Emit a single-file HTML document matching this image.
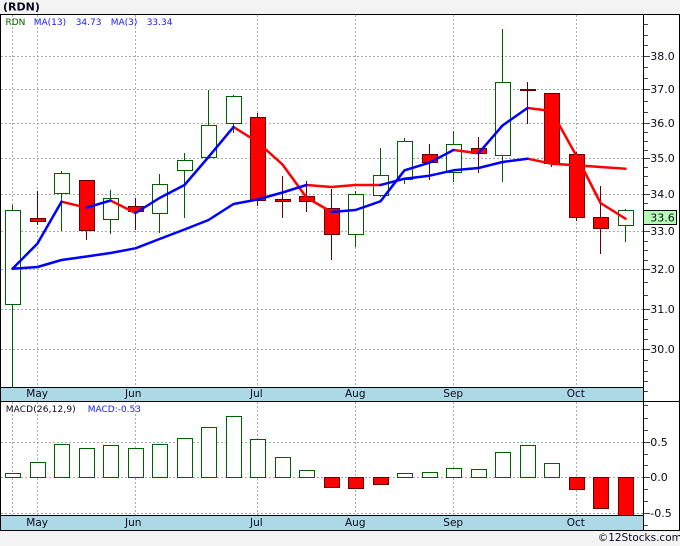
<!DOCTYPE html>
<html><head><meta charset="utf-8"><style>
html,body{margin:0;padding:0;background:#f3f3f3;width:680px;height:546px;overflow:hidden}
svg{display:block}
text{font-family:"DejaVu Sans",sans-serif;font-size:11px;fill:#0a0a1e}
.s{font-size:9px}
.m{font-size:10.5px}
</style></head><body>
<svg width="680" height="546" viewBox="0 0 680 546" xmlns="http://www.w3.org/2000/svg">
<rect width="680" height="546" fill="#f3f3f3"/>
<rect x="0" y="14" width="680" height="516" fill="#fff"/>
<!-- grid -->
<g stroke="#aaa" stroke-width="1" stroke-dasharray="2 2" fill="none" shape-rendering="crispEdges">
<path d="M1 56.5H643M1 89.5H643M1 123.5H643M1 158.5H643M1 194.5H643M1 231.5H643M1 269.5H643M1 309.5H643M1 349.5H643"/>
<path d="M1 442.5H643M1 477.5H643M1 513.5H643"/>
<path d="M12.5 15V387M37.5 15V387M135.5 15V387M257.5 15V387M355.5 15V387M453.5 15V387M576.5 15V387"/>
<path d="M12.5 402V515M37.5 402V515M135.5 402V515M257.5 402V515M355.5 402V515M453.5 402V515M576.5 402V515"/>
</g>
<!-- bands -->
<rect x="0" y="388" width="643" height="13" fill="#add8e6"/>
<rect x="0" y="516" width="643" height="14" fill="#add8e6"/>
<!-- wicks -->
<g fill="none" stroke-width="1" shape-rendering="crispEdges">
<path stroke="#005f00" d="M12.5 205V387M61.5 171V231M110.5 190V234M159.5 174V233M184.5 153V218M208.5 90V158M233.5 95V133M355.5 191V247M380.5 148V197M404.5 138V184M453.5 131V182M502.5 29V182M625.5 209V242"/>
<path stroke="#600000" d="M37.5 191V225M86.5 180V240M135.5 198V230M257.5 113V206M282.5 176V218M306.5 181V212M331.5 189V260M429.5 144V180M478.5 137V173M527.5 82V124M551.5 93V167M576.5 152V221M600.5 186V254"/>
</g>
<!-- green bodies -->
<g fill="#fff" stroke="#005f00" stroke-width="1" shape-rendering="crispEdges">
<rect x="5.5" y="210.5" width="15" height="94"/>
<rect x="54.5" y="173.5" width="15" height="20"/>
<rect x="103.5" y="198.5" width="15" height="21"/>
<rect x="152.5" y="184.5" width="15" height="29"/>
<rect x="177.5" y="160.5" width="15" height="10"/>
<rect x="201.5" y="125.5" width="15" height="32"/>
<rect x="226.5" y="96.5" width="15" height="27"/>
<rect x="348.5" y="194.5" width="15" height="40"/>
<rect x="373.5" y="175.5" width="15" height="20"/>
<rect x="397.5" y="141.5" width="15" height="38"/>
<rect x="446.5" y="144.5" width="15" height="28"/>
<rect x="495.5" y="82.5" width="15" height="73"/>
<rect x="618.5" y="210.5" width="15" height="15"/>
</g>
<!-- red bodies -->
<g fill="#ff0000" stroke="#660000" stroke-width="1" shape-rendering="crispEdges">
<rect x="30.5" y="218.5" width="15" height="3"/>
<rect x="79.5" y="180.5" width="15" height="50"/>
<rect x="128.5" y="206.5" width="15" height="5"/>
<rect x="250.5" y="117.5" width="15" height="83"/>
<rect x="275.5" y="199.5" width="15" height="2"/>
<rect x="299.5" y="196.5" width="15" height="5"/>
<rect x="324.5" y="208.5" width="15" height="26"/>
<rect x="422.5" y="154.5" width="15" height="8"/>
<rect x="471.5" y="148.5" width="15" height="5"/>
<rect x="520.5" y="89.5" width="15" height="1"/>
<rect x="544.5" y="93.5" width="15" height="70"/>
<rect x="569.5" y="154.5" width="15" height="63"/>
<rect x="593.5" y="217.5" width="15" height="11"/>
</g>
<!-- MA lines -->
<g fill="none" stroke-width="2.5" stroke-linejoin="round" stroke-linecap="round">
<path stroke="#ff0000" d="M306.5 185L331.5 187L355.5 185L380.5 185"/>
<path stroke="#ff0000" d="M527.5 158.7L551.5 163.7L576.5 165.3L600.5 167L625.5 168.7"/>
<path stroke="#ff0000" d="M61.5 201.7L86.5 207.7M110.5 200.5L135.5 213"/>
<path stroke="#ff0000" d="M233.5 127L257.5 142L282.5 164.5L306.5 197.5L331.5 212"/>
<path stroke="#ff0000" d="M453.5 150L478.5 153.3"/>
<path stroke="#ff0000" d="M527.5 108L551.5 111L576.5 156L600.5 203L625.5 218.7"/>
<path stroke="#0000ff" d="M12.5 268.7L37.5 267L61.5 260L86.5 256.5L110.5 253L135.5 248.3L159.5 239L184.5 229.5L208.5 220L233.5 204L257.5 199.5L282.5 192.5L306.5 185"/>
<path stroke="#0000ff" d="M380.5 185L404.5 178.7L429.5 175.7L453.5 170.3L478.5 168L502.5 162L527.5 158.7"/>
<path stroke="#0000ff" d="M12.5 268.7L37.5 243.5L61.5 201.7M86.5 207.7L110.5 200.5M135.5 213L159.5 198L184.5 185L208.5 157L233.5 127"/>
<path stroke="#0000ff" d="M331.5 212L355.5 210L380.5 201.3L404.5 170.3L429.5 162.7L453.5 150"/>
<path stroke="#0000ff" d="M478.5 153.3L502.5 125.5L527.5 108"/>
</g>
<!-- MACD green bars -->
<g fill="#fff" stroke="#005f00" stroke-width="1" shape-rendering="crispEdges">
<rect x="5.5" y="473.5" width="15" height="4"/>
<rect x="30.5" y="462.5" width="15" height="15"/>
<rect x="54.5" y="444.5" width="15" height="33"/>
<rect x="79.5" y="448.5" width="15" height="29"/>
<rect x="103.5" y="445.5" width="15" height="32"/>
<rect x="128.5" y="448.5" width="15" height="29"/>
<rect x="152.5" y="444.5" width="15" height="33"/>
<rect x="177.5" y="438.5" width="15" height="39"/>
<rect x="201.5" y="427.5" width="15" height="50"/>
<rect x="226.5" y="416.5" width="15" height="61"/>
<rect x="250.5" y="439.5" width="15" height="38"/>
<rect x="275.5" y="457.5" width="15" height="20"/>
<rect x="299.5" y="470.5" width="15" height="7"/>
<rect x="397.5" y="473.5" width="15" height="4"/>
<rect x="422.5" y="472.5" width="15" height="5"/>
<rect x="446.5" y="468.5" width="15" height="9"/>
<rect x="471.5" y="469.5" width="15" height="8"/>
<rect x="495.5" y="452.5" width="15" height="25"/>
<rect x="520.5" y="445.5" width="15" height="32"/>
<rect x="544.5" y="463.5" width="15" height="14"/>
</g>
<g fill="#ff0000" stroke="#660000" stroke-width="1" shape-rendering="crispEdges">
<rect x="324.5" y="477.5" width="15" height="10"/>
<rect x="348.5" y="477.5" width="15" height="11"/>
<rect x="373.5" y="477.5" width="15" height="7"/>
<rect x="569.5" y="477.5" width="15" height="12"/>
<rect x="593.5" y="477.5" width="15" height="31"/>
<rect x="618.5" y="477.5" width="15" height="38"/>
</g>
<!-- frame -->
<g stroke="#000" stroke-width="1" fill="none" shape-rendering="crispEdges">
<path d="M0 14.5H680M0 387.5H643M0 401.5H680M0 515.5H643M0 530.5H680"/>
<path d="M0.5 14V531M643.5 14V531M679.5 14V531"/>
</g>
<!-- ticks -->
<g stroke="#444" stroke-width="1" fill="none" shape-rendering="crispEdges">
<path d="M644 56.5H650M644 89.5H650M644 123.5H650M644 158.5H650M644 194.5H650M644 231.5H650M644 269.5H650M644 309.5H650M644 349.5H650M644 442.5H650M644 477.5H650M644 513.5H650"/>
<path d="M644 24.5H648M644 35.5H648M644 45.5H648M644 67.5H648M644 78.5H648M644 101.5H648M644 112.5H648M644 132.5H648M644 141.5H648M644 150.5H648M644 167.5H648M644 176.5H648M644 185.5H648M644 203.5H648M644 212.5H648M644 221.5H648M644 241.5H648M644 250.5H648M644 260.5H648M644 282.5H648M644 295.5H648M644 319.5H648M644 329.5H648M644 339.5H648M644 360.5H648M644 371.5H648M644 381.5H648M644 391.5H648"/>
<path d="M644 405.5H648M644 418.5H648M644 430.5H648M644 454.5H648M644 465.5H648M644 489.5H648M644 501.5H648M644 525.5H648"/>
</g>
<!-- price box -->
<rect x="643.5" y="210.5" width="33" height="14" fill="#b4ffb4" stroke="#000" shape-rendering="crispEdges"/>
<!-- text -->
<text x="3" y="10.5" style="font-weight:bold">(RDN)</text>
<text class="s" x="5.5" y="25" style="fill:#006400">RDN</text>
<text class="s" x="33.7" y="25" style="fill:#1a1aff">MA(13)</text>
<text class="s" x="75.7" y="25" style="fill:#1a1aff">34.73</text>
<text class="s" x="110.7" y="25" style="fill:#1a1aff">MA(3)</text>
<text class="s" x="146.7" y="25" style="fill:#1a1aff">33.34</text>
<text x="650.3" y="60">38.0</text>
<text x="650.3" y="93">37.0</text>
<text x="650.3" y="127">36.0</text>
<text x="650.3" y="162">35.0</text>
<text x="650.3" y="198">34.0</text>
<text x="650.3" y="221.5">33.6</text>
<text x="650.3" y="235">33.0</text>
<text x="650.3" y="273">32.0</text>
<text x="650.3" y="313">31.0</text>
<text x="650.3" y="353">30.0</text>
<text x="650.3" y="446">0.5</text>
<text x="650.3" y="481">0.0</text>
<text x="650.3" y="517">-0.5</text>
<text class="m" x="26.3" y="397">May</text>
<text class="m" x="125" y="397">Jun</text>
<text class="m" x="250" y="397">Jul</text>
<text class="m" x="345" y="397">Aug</text>
<text class="m" x="443.3" y="397">Sep</text>
<text class="m" x="566.7" y="397">Oct</text>
<text class="s" x="5.7" y="412" textLength="70">MACD(26,12,9)</text>
<text class="s" x="87.7" y="412" style="fill:#1a1aff">MACD:-0.53</text>
<text class="m" x="26.3" y="526">May</text>
<text class="m" x="125" y="526">Jun</text>
<text class="m" x="250" y="526">Jul</text>
<text class="m" x="345" y="526">Aug</text>
<text class="m" x="443.3" y="526">Sep</text>
<text class="m" x="566.7" y="526">Oct</text>
<text class="m" x="597.7" y="541">©12Stocks.com</text>
</svg>
</body></html>
